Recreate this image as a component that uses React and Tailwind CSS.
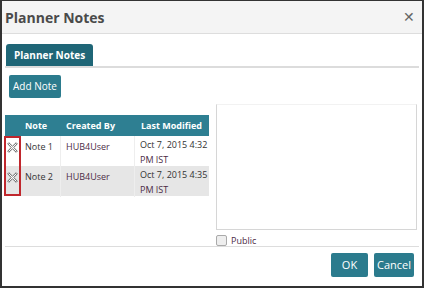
import React from "react";

const rows = [
  { note: "Note 1", by: "HUB4User", time: "4:32", bg: "bg-white" },
  { note: "Note 2", by: "HUB4User", time: "4:35", bg: "bg-[#e6e6e6]" },
];

function DeleteIcon() {
  return (
    <svg width="11" height="11" viewBox="0 0 12 12">
      <polygon
        points="2,0.8 6,4.6 10,0.8 11.2,2 7.4,6 11.2,10 10,11.2 6,7.4 2,11.2 0.8,10 4.6,6 0.8,2"
        fill="#fff"
        stroke="#555"
        strokeWidth="1"
        strokeLinejoin="round"
      />
    </svg>
  );
}

export default function App() {
  return (
    <div className="w-[424px] h-[288px] bg-white border-2 border-[#333] border-t flex flex-col text-[#333] font-['Open_Sans',sans-serif] overflow-hidden">
      {/* Title bar */}
      <div className="h-[33px] shrink-0 bg-[#f4f4f4] border-b border-[#ddd] flex items-center justify-between pl-[3px] pr-[7px]">
        <span className="text-[14px] font-bold text-[#4a4a4a]">Planner Notes</span>
        <span className="text-[14px] text-[#666] leading-none">✕</span>
      </div>

      <div className="flex-1 flex flex-col px-[3px]">
        {/* Tabs */}
        <div className="mt-[10px] border-b-2 border-[#dcdcdc] pl-[1px] flex">
          <div className="h-[22px] px-[8px] bg-[#1f6677] rounded-t-[3px] text-white text-[10px] font-bold flex items-center">
            Planner Notes
          </div>
        </div>

        <div className="flex gap-[7px]">
          {/* Left column */}
          <div className="w-[204px] flex flex-col">
            <button className="mt-[7px] ml-[4px] w-[52px] h-[23px] bg-[#2b7b8d] rounded-[2px] text-white text-[10px] flex items-center justify-center">
              Add Note
            </button>

            <div className="relative mt-[17px] text-[9px] whitespace-nowrap">
              <div className="grid grid-cols-[15px_41px_74px_74px] h-[21px] bg-[#2e7f92] text-white font-bold items-center">
                <div />
                <div className="pl-[5px]">Note</div>
                <div className="pl-[5px]">Created By</div>
                <div className="pl-[6px]">Last Modified</div>
              </div>
              {rows.map((r) => (
                <div key={r.note} className={`grid grid-cols-[15px_41px_74px_74px] h-[30px] ${r.bg}`}>
                  <div className="flex justify-center pt-[6px]">
                    <DeleteIcon />
                  </div>
                  <div className="pl-[5px] pt-[4px] border-r border-[#eee]">{r.note}</div>
                  <div className="pl-[5px] pt-[4px] border-r border-[#eee] text-[#4b2b45]">{r.by}</div>
                  <div className="pl-[5px] pt-[1px] leading-[15px]">
                    Oct 7, 2015 {r.time}
                    <br />
                    <span className="text-[#4b2b45]">PM IST</span>
                  </div>
                </div>
              ))}
              <div className="absolute left-[-1px] top-[21px] w-[17px] h-[60px] border-2 border-[#c0272d]" />
            </div>
          </div>

          {/* Right column */}
          <div className="flex-1 flex flex-col pr-[2px]">
            <div className="mt-[36px] h-[126px] border border-[#d6d6d6] border-t-[#f2f2f2]" />
            <label className="flex items-center gap-[4px] mt-[5px] h-[11px] leading-none text-[9px] text-[#4b2b45]">
              <span className="w-[11px] h-[11px] border border-[#aaa] rounded-[2px] bg-[#eee]" />
              Public
            </label>
          </div>
        </div>

        {/* Footer */}
        <div className="border-t border-[#ddd] flex justify-end gap-[6px] pt-[6px] pr-[5px]">
          <button className="w-[37px] h-[24px] bg-[#2b7b8d] rounded-[2px] text-white text-[11px]">OK</button>
          <button className="w-[40px] h-[24px] bg-[#2b7b8d] rounded-[2px] text-white text-[11px]">Cancel</button>
        </div>
      </div>
    </div>
  );
}
